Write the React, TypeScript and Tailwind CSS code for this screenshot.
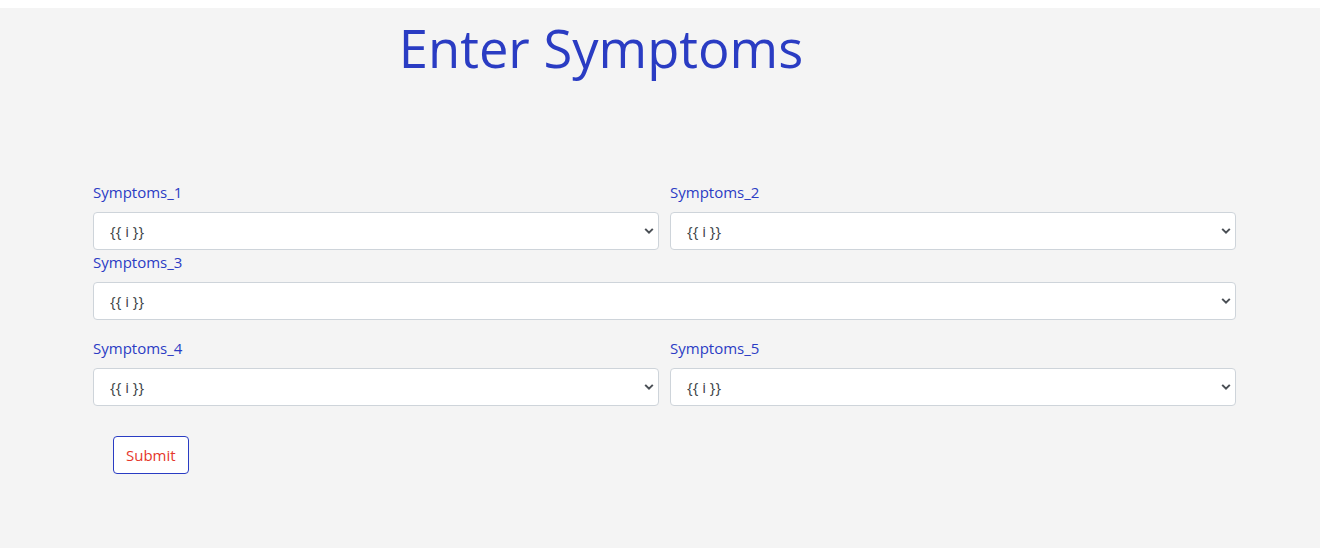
import React from 'react';

const font = { fontFamily: '"Open Sans", "Noto Sans", sans-serif' };

const SymptomSelect: React.FC<{ label: string; id: string }> = ({ label, id }) => {
  return (
    <div className="flex flex-col">
      <label htmlFor={id} className="text-[15px] leading-6 mb-2 text-[#2b3cc4]">
        {label}
      </label>
      <div className="relative">
        <select
          id={id}
          defaultValue="{{ i }}"
          className="w-full h-[38px] appearance-none bg-white border border-[#ced4da] rounded-[4px] pl-4 pr-8 text-[15px] text-[#3a3f44] outline-none"
          style={font}
        >
          <option>{'{{ i }}'}</option>
        </select>
        <svg
          className="pointer-events-none absolute right-[5px] top-1/2 -translate-y-1/2"
          width="10"
          height="7"
          viewBox="0 0 10 7"
          fill="none"
        >
          <path d="M1.2 1.4 5 5.2l3.8-3.8" stroke="#4a4f55" strokeWidth="2" />
        </svg>
      </div>
    </div>
  );
};

export default function App() {
  return (
    <div className="min-h-screen bg-white pt-2" style={font}>
      <div className="w-[1320px] h-[540px] bg-[#f4f4f4]">
        {/* Header */}
        <h1 className="w-[1202px] text-center text-[52.5px] leading-[80px] text-[#2a3cc3] font-normal">
          Enter Symptoms
        </h1>

        {/* Form */}
        <form className="ml-[93px] w-[1143px] mt-[92px]" onSubmit={(e) => e.preventDefault()}>
          <div className="grid grid-cols-2 gap-x-[11px]">
            <SymptomSelect label="Symptoms_1" id="s1" />
            <SymptomSelect label="Symptoms_2" id="s2" />
          </div>
          <SymptomSelect label="Symptoms_3" id="s3" />
          <div className="grid grid-cols-2 gap-x-[11px] mt-4">
            <SymptomSelect label="Symptoms_4" id="s4" />
            <SymptomSelect label="Symptoms_5" id="s5" />
          </div>
          <button
            type="submit"
            className="mt-[30px] ml-5 h-[38px] px-3 bg-white border border-[#2a3cc3] rounded-[4px] text-[15px] text-[#e5372c]"
          >
            Submit
          </button>
        </form>
      </div>
    </div>
  );
}
